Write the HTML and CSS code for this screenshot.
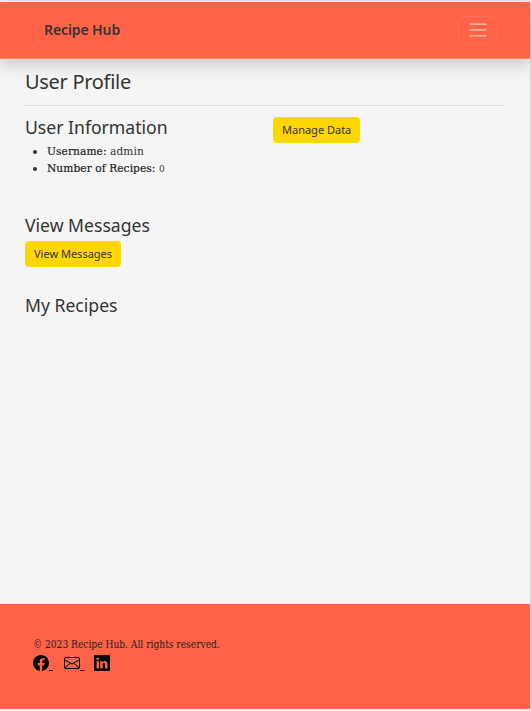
FILE: index.html
```html
<!DOCTYPE html>
<html lang="en">
<head>
<meta charset="utf-8">
<title>Recipe Hub</title>
<link rel="stylesheet" href="styles.css">
</head>
<body>
<div class="page">
  <header class="navbar">
    <a class="brand">Recipe Hub</a>
    <button class="toggler" aria-label="Menu">
      <svg width="22" height="22" viewBox="0 0 30 30" fill="none"><path d="M4 7h22M4 15h22M4 23h22" stroke="#fff" stroke-opacity=".6" stroke-width="2" stroke-linecap="round"/></svg>
    </button>
  </header>
  <main>
    <h1>User Profile</h1>
    <hr>
    <div class="row">
      <section class="col">
        <h2>User Information</h2>
        <ul>
          <li><strong>Username:</strong> <span>admin</span></li>
          <li><strong>Number of Recipes:</strong> <span class="figure">0</span></li>
        </ul>
      </section>
      <section class="col"><button class="btn">Manage Data</button></section>
    </div>
    <section class="messages">
      <h2>View Messages</h2>
      <button class="btn">View Messages</button>
    </section>
    <h2>My Recipes</h2>
  </main>
  <footer>
    <p>© 2023 Recipe Hub. All rights reserved.</p>
    <div class="social">
      <a class="tail"><svg width="16" height="16" viewBox="0 0 16 16"><path d="M16 8.05C16 3.6 12.42 0 8 0S0 3.6 0 8.05C0 12.07 2.93 15.4 6.75 16v-5.62H4.72V8.05h2.03V6.28c0-2.02 1.2-3.13 3.02-3.13.88 0 1.79.16 1.79.16v1.98h-1.01c-.99 0-1.3.62-1.3 1.26v1.5h2.22l-.36 2.33H9.25V16C13.07 15.4 16 12.07 16 8.05z"/></svg></a>
      <a class="tail"><svg width="16" height="16" viewBox="0 0 16 16" fill="none" stroke="#000"><rect x=".5" y="2.5" width="15" height="11" rx="1.5"/><path d="M.6 4.7 8 9.1l7.4-4.4M.8 12.8l5.5-4.5M15.2 12.8 9.7 8.3"/></svg></a>
      <a><svg width="16" height="16" viewBox="0 0 16 16"><path fill-rule="evenodd" d="M1.15 0h13.7C15.49 0 16 .51 16 1.15v13.7c0 .64-.51 1.15-1.15 1.15H1.15C.51 16 0 15.49 0 14.85V1.15C0 .51.51 0 1.15 0zM2.54 6.17v7.22h2.4V6.17zM3.74 2.52a1.25 1.25 0 1 0 0 2.5 1.25 1.25 0 0 0 0-2.5zM6.26 6.17v7.22h2.4V9.36c0-.86.55-1.31 1.25-1.31.87 0 1.22.66 1.22 1.63v3.71h2.4V9.25c0-2.22-1.18-3.25-2.76-3.25-1.3 0-1.87.73-2.11 1.19V6.17z"/></svg></a>
    </div>
  </footer>
</div>
</body>
</html>
```
FILE: styles.css
```css
* { box-sizing: border-box; }
body { margin: 0; background: #f5f5f5; color: #333; font: 11.8px/17px "DejaVu Serif Condensed", "DejaVu Serif", serif; font-stretch: condensed; }
.page { height: 711px; display: flex; flex-direction: column; border-top: 1px solid #e8e8e8; border-right: 1px solid #d9d9d9; padding: 1px 0 2px; }
.navbar { height: 57px; flex: none; display: flex; align-items: center; justify-content: space-between; padding: 0 33px 0 44px; background: #ff6347; border-bottom: 1px solid #f48370; box-shadow: 0 7px 14px rgba(0,0,0,.16); }
.brand { font: 600 14px/20px "Noto Sans", sans-serif; letter-spacing: -.1px; }
.toggler { width: 39px; height: 28px; padding: 0; display: grid; place-items: center; background: none; border: 1px solid #fc6d53; border-radius: 5px; }
main { flex: 1; padding: 10px 25px 0 25px; }
h1, h2, .btn { font-family: "Noto Sans", sans-serif; font-weight: 400; font-stretch: normal; white-space: nowrap; }
h1 { margin: 0; font-size: 20px; line-height: 26px; letter-spacing: -.3px; }
hr { margin: 10px 0 10px; border: 0; border-top: 1px solid #dedede; }
.row { display: grid; grid-template-columns: 248px 1fr; height: 98px; }
h2 { margin: -1px 0 0; font-size: 17.6px; line-height: 24px; }
ul { margin: 4px 0 0; padding-left: 22px; letter-spacing: .08px; }
strong { font-weight: 400; color: #222; -webkit-text-stroke: .2px #222; }
.figure { font-size: 10px; line-height: 1; }
.btn { display: block; height: 26px; margin: 1px 0 0; padding: 0 9px 2px; border: 0; border-radius: 4px; background: #ffd700; color: #333; font-size: 11px; }
.messages { height: 81px; }
.messages .btn { margin-top: 4px; }
footer { height: 105px; flex: none; padding: 33px 33px 0; background: #ff6347; color: #222; }
footer p { margin: 0; font-size: 10.15px; line-height: 16px; }
.social { display: flex; height: 16px; margin-top: 2px; color: #000; }
.social a { width: 30.5px; display: flex; align-items: flex-end; }
.social svg { display: block; flex: none; }
.tail::after { content: ""; width: 4px; height: 1px; background: #000; }
```
